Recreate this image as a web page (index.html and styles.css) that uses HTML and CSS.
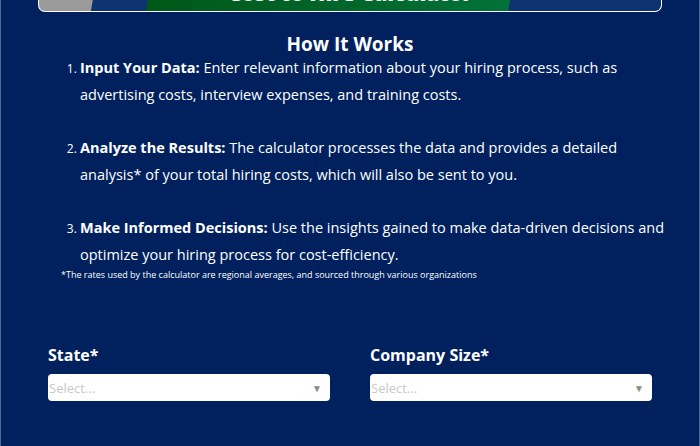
FILE: index.html
```html
<!DOCTYPE html>
<html lang="en">
<head>
  <meta charset="UTF-8" />
  <title>Cost to Hire Calculator</title>
  <link rel="stylesheet" href="styles.css">
</head>
<body>
  <div class="page">
    <div class="banner">
      <h1>Cost to Hire Calculator</h1>
    </div>

    <div class="how">
      <h2>How It Works</h2>
      <ol>
        <li><b>Input Your Data:</b> Enter relevant information about your hiring process, such as advertising costs, interview expenses, and training costs.</li>
        <li><b>Analyze the Results:</b> The calculator processes the data and provides a detailed analysis* of your total hiring costs, which will also be sent to you.</li>
        <li><b>Make Informed Decisions:</b> Use the insights gained to make data-driven decisions and optimize your hiring process for cost-efficiency.</li>
      </ol>
      <p class="note">*The rates used by the calculator are regional averages, and sourced through various organizations</p>
    </div>

    <div class="form">
      <div class="field">
        <label>State*</label>
        <div class="select"><span>Select...</span><span class="arrow">&#9660;</span></div>
      </div>
      <div class="field">
        <label>Company Size*</label>
        <div class="select"><span>Select...</span><span class="arrow">&#9660;</span></div>
      </div>
    </div>
  </div>
</body>
</html>
```

FILE: styles.css
```css
html, body {
  margin: 0;
  padding: 0;
}
body {
  font-family: "Open Sans", sans-serif;
  background: #00215e;
  color: #fff;
}
.page {
  height: 446px;
  border-left: 1px solid #4d6a96;
  border-right: 1px solid #4d6a96;
  box-sizing: border-box;
  overflow: hidden;
}
.banner {
  margin: -20px 37px 0;
  height: 31px;
  border: 1px solid #fff;
  border-top: none;
  border-radius: 0 0 7px 7px;
  background: linear-gradient(100deg, #9b9b9b 0, #9b9b9b 56px, #0d3370 57px, #0d3370 110px, #005818 111px, #007238 467px, #0d3370 468px);
  overflow: hidden;
}
.banner h1 {
  margin: 0;
  text-align: center;
  font-size: 21px;
  font-weight: 800;
  line-height: 26px;
}
.how {
  margin: 0 30px 0 38px;
}
.how h2 {
  text-align: center;
  font-size: 19px;
  font-weight: 700;
  margin: 19px 0 0;
  padding-right: 8px;
  line-height: 26px;
}
ol {
  margin: -3px 0 0;
  padding-left: 41px;
}
ol li {
  font-size: 14.5px;
  line-height: 27px;
  margin-bottom: 26px;
}
ol li:last-child {
  margin-bottom: 0;
}
ol li::marker {
  font-size: 12px;
}
.note {
  font-size: 9px;
  margin: 0 0 0 22px;
  line-height: 14px;
}
.form {
  display: grid;
  grid-template-columns: 282px 282px;
  column-gap: 40px;
  margin: 63px 47px 0;
}
.field label {
  display: block;
  font-weight: 700;
  font-size: 16px;
  line-height: 20px;
  margin-bottom: 9px;
}
.select {
  display: flex;
  justify-content: space-between;
  align-items: center;
  height: 27px;
  background: #fff;
  border-radius: 4px;
  font-size: 13px;
  color: #c8c8c8;
  padding: 0 8px 0 1px;
}
.arrow {
  color: #888;
  font-size: 10px;
}
```
